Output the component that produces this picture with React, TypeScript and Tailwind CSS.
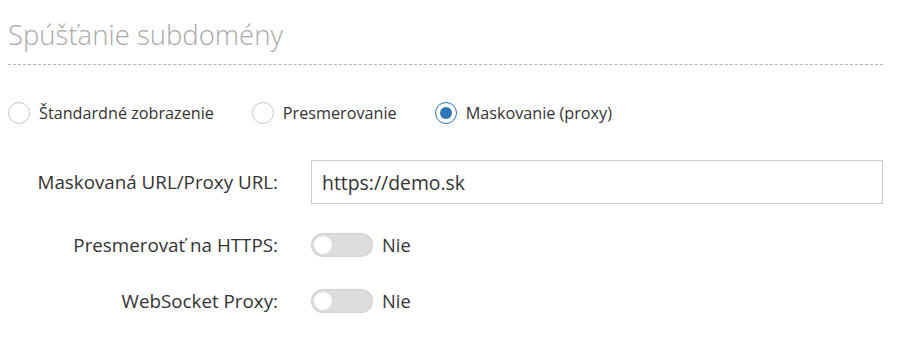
import { useState } from 'react';

const Radio = ({ checked, label, onClick }: { checked: boolean; label: string; onClick: () => void }) => (
  <label className="flex items-center gap-[9px] cursor-pointer" onClick={onClick}>
    <span
      className={`flex h-[22px] w-[22px] items-center justify-center rounded-full border bg-white ${
        checked ? 'border-[#2f78b7]' : 'border-[#c8c8c8]'
      }`}
    >
      {checked && <span className="h-[12px] w-[12px] rounded-full bg-[#2f78b7]" />}
    </span>
    <span className="text-[16.2px] leading-[22px] text-[#333]">{label}</span>
  </label>
);

const Toggle = ({ on, onClick }: { on: boolean; onClick: () => void }) => (
  <div className="flex items-center gap-[9px]">
    <button
      onClick={onClick}
      className={`flex h-[24px] w-[62px] items-center rounded-full px-[3px] shadow-[inset_0_0_3px_rgba(0,0,0,0.12)] ${
        on ? 'justify-end bg-[#2f78b7]' : 'justify-start bg-[#dddddd]'
      }`}
    >
      <span className="h-[18px] w-[18px] rounded-full bg-white" />
    </button>
    <span className="text-[18.3px] leading-[24px] text-[#333]">{on ? 'Áno' : 'Nie'}</span>
  </div>
);

export default function App() {
  const [mode, setMode] = useState<'standard' | 'redirect' | 'proxy'>('proxy');
  const [https, setHttps] = useState(false);
  const [ws, setWs] = useState(false);
  const [url, setUrl] = useState('https://demo.sk');

  return (
    <div className="bg-white pl-[8px] pr-[26px] pt-[17px] font-['Open_Sans',sans-serif]" style={{ minHeight: 355 }}>
      <h2 className="pb-[11px] text-[27.5px] font-light leading-[36px] text-[#a9a9a9]">Spúšťanie subdomény</h2>
      <div className="border-t border-dashed border-[#b5b5b5]" />

      <div className="mt-[37px] flex items-center gap-[38px]">
        <Radio checked={mode === 'standard'} label="Štandardné zobrazenie" onClick={() => setMode('standard')} />
        <Radio checked={mode === 'redirect'} label="Presmerovanie" onClick={() => setMode('redirect')} />
        <Radio checked={mode === 'proxy'} label="Maskovanie (proxy)" onClick={() => setMode('proxy')} />
      </div>

      <div className="mt-[36px] flex items-center gap-[33px]">
        <label className="w-[270px] text-right text-[18.8px] leading-[24px] text-[#333]">Maskovaná URL/Proxy URL:</label>
        <input
          value={url}
          onChange={(e) => setUrl(e.target.value)}
          className="h-[44px] flex-1 border border-[#cccccc] px-[10px] text-[19.4px] text-[#333] outline-none"
        />
      </div>
      <div className="mt-[29px] flex items-center gap-[33px]">
        <label className="w-[270px] text-right text-[18.8px] leading-[24px] text-[#333]">Presmerovať na HTTPS:</label>
        <Toggle on={https} onClick={() => setHttps(!https)} />
      </div>
      <div className="mt-[32px] flex items-center gap-[33px]">
        <label className="w-[270px] text-right text-[18.8px] leading-[24px] text-[#333]">WebSocket Proxy:</label>
        <Toggle on={ws} onClick={() => setWs(!ws)} />
      </div>
    </div>
  );
}
